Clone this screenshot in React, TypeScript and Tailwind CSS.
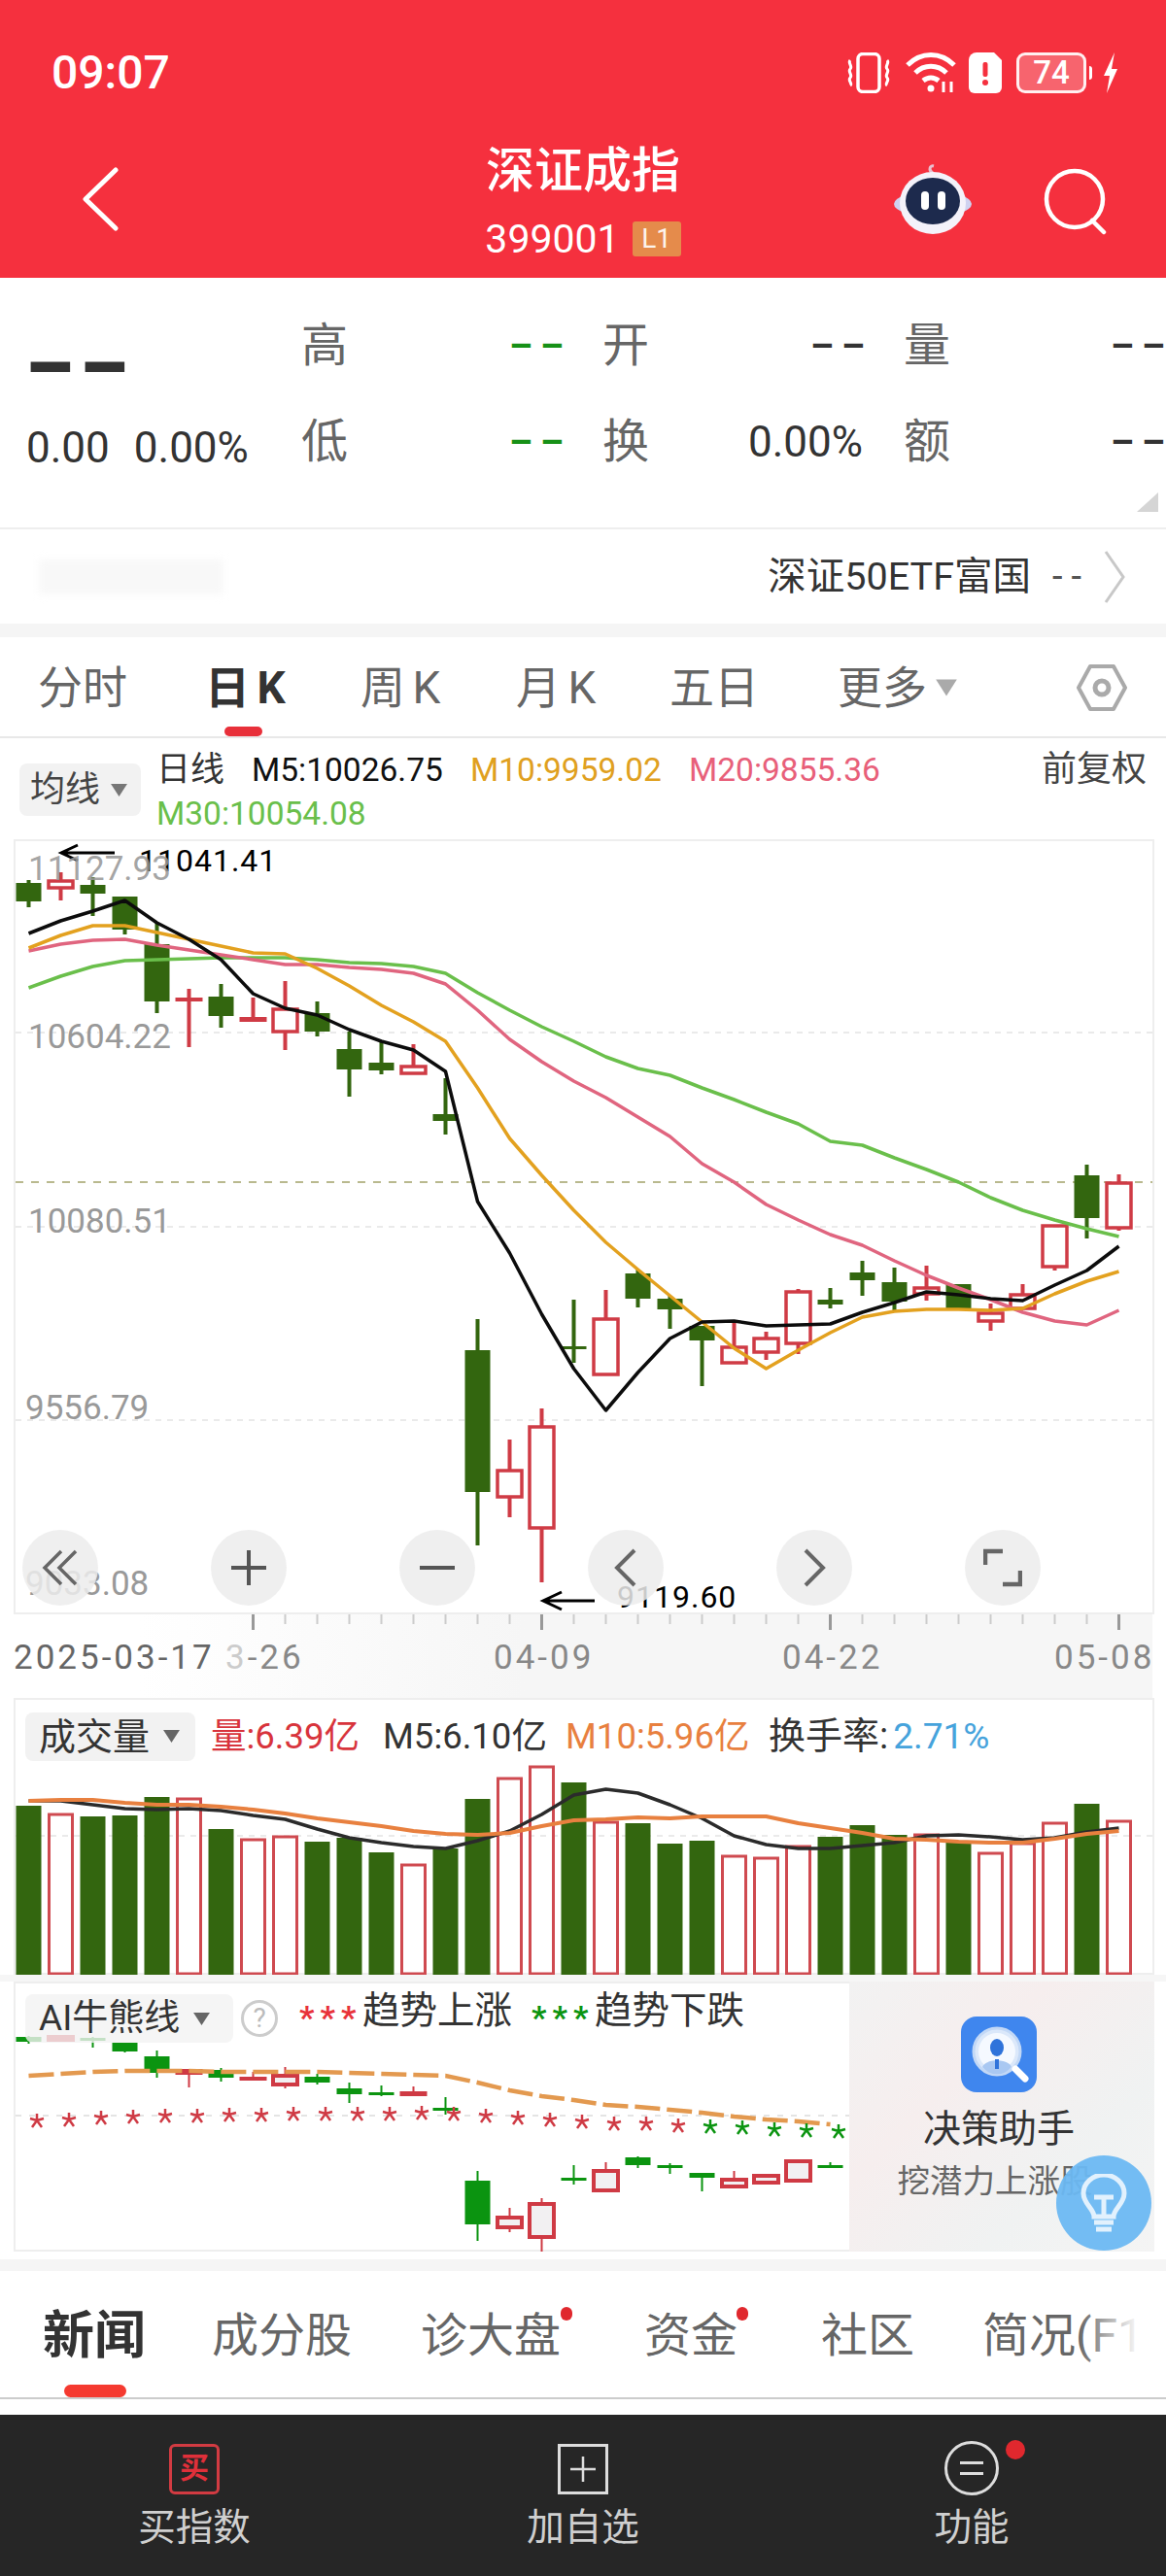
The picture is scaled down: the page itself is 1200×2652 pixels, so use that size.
import React from "react";

const cx = (i: number) => 29.5 + 33 * i;
const pts = (ys: number[]) => ys.map((y, i) => `${cx(i)},${y}`).join(" ");

type C = [string, number, number, number, number];
const main: C[] = [
  ["G",906,909,928,934],["R",898,906,913,927],["G",903,911,920,943],["G",923,923,957,962],["G",950,972,1031,1043],
  ["S",1018,1027,1031,1078],["G",1013,1026,1046,1058],["S",1027,1047,1052,1052],["R",1010,1038,1061,1081],["G",1031,1043,1062,1067],
  ["G",1062,1080,1101,1129],["G",1072,1094,1102,1106],["R",1075,1097,1104,1106],["G",1110,1147,1154,1168],["G",1358,1390,1536,1591],
  ["R",1482,1513,1540,1562],["R",1450,1468,1572,1629],["G",1338,1386,1388,1403],["R",1328,1357,1414,1414],["G",1307,1311,1337,1346],
  ["G",1334,1337,1348,1368],["G",1365,1365,1380,1427],["R",1360,1386,1402,1404],["R",1371,1377,1391,1400],["R",1327,1329,1382,1394],
  ["G",1326,1338,1343,1347],["G",1298,1310,1318,1334],["G",1305,1320,1340,1349],["R",1303,1325,1331,1339],["G",1322,1322,1347,1347],
  ["R",1342,1351,1359,1370],["R",1322,1332,1346,1346],["R",1261,1261,1303,1308],["G",1199,1210,1254,1275],["R",1209,1217,1263,1267],
];
const m5 = [961,948,938,927,950,967,988,1023,1038,1045,1060,1072,1081,1103,1237,1290,1353,1409,1452,1413,1378,1361,1360,1365,1364,1363,1351,1341,1330,1333,1337,1339,1323,1308,1283];
const m10 = [976,963,953,953,960,967,974,981,982,997,1015,1035,1052,1072,1120,1172,1210,1246,1279,1307,1334,1361,1388,1409,1390,1372,1356,1350,1348,1348,1349,1347,1332,1319,1309];
const m20 = [979,972,968,967,973,978,983,988,993,993,996,998,1002,1013,1040,1070,1093,1113,1130,1150,1170,1198,1217,1240,1256,1271,1282,1298,1313,1326,1338,1351,1360,1364,1349];
const m30 = [1017,1005,995,989,988,987,986,986,986,988,991,992,995,1002,1022,1040,1057,1072,1088,1100,1107,1120,1132,1145,1157,1175,1179,1192,1204,1217,1233,1246,1256,1265,1273];

const vol: [string, number][] = [
  ["G",1859],["R",1867],["G",1870],["G",1869],["G",1850],["R",1851],["G",1883],["R",1893],["R",1890],["G",1896],["G",1892],["G",1907],
  ["R",1919],["G",1903],["G",1852],["R",1830],["R",1818],["G",1835],["R",1875],["G",1877],["G",1898],["G",1895],["R",1910],["R",1912],
  ["R",1900],["G",1891],["G",1879],["G",1889],["R",1888],["G",1896],["R",1907],["R",1897],["R",1876],["G",1857],["R",1874],
];
const vb = [1854,1854,1858,1862,1863,1862,1864,1869,1873,1883,1892,1897,1901,1903,1895,1885,1868,1848,1842,1846,1858,1872,1890,1899,1903,1903,1900,1897,1890,1889,1891,1894,1892,1886,1882];
const vo = [1854,1853,1853,1856,1858,1858,1860,1863,1867,1872,1876,1880,1885,1888,1889,1887,1880,1874,1873,1871,1872,1870,1870,1870,1877,1882,1887,1893,1894,1896,1897,1897,1893,1888,1885];

const ai: C[] = [
  ["G",2096,2097,2102,2104],["R",2096,2096,2099,2102],["G",2097,2098,2101,2108],["G",2103,2103,2112,2113],["G",2111,2117,2134,2139],
  ["S",2130,2130,2136,2149],["G",2129,2131,2139,2143],["S",2133,2138,2142,2142],["R",2128,2136,2145,2150],["G",2135,2138,2144,2146],
  ["G",2144,2150,2156,2165],["G",2147,2154,2156,2158],["S",2148,2153,2158,2158],["G",2159,2170,2173,2177],["G",2235,2245,2290,2307],
  ["R",2273,2282,2292,2298],["R",2263,2268,2302,2318],["G",2229,2242,2243,2249],["R",2226,2234,2254,2254],["G",2220,2221,2229,2232],
  ["G",2227,2229,2232,2238],["G",2237,2237,2242,2256],["R",2235,2243,2250,2250],["R",2239,2239,2246,2247],["R",2224,2224,2244,2247],
  ["G",2226,2229,2231,2232],
];
const aiLine = [2137,2135,2133,2132,2132,2132,2133,2133,2133,2133,2134,2135,2136,2137,2144,2152,2158,2162,2167,2169,2172,2175,2179,2182,2184,2187];
const stars = [2183,2182,2180,2179,2178,2178,2177,2177,2176,2176,2176,2176,2175,2176,2178,2180,2182,2184,2186,2186,2188,2189,2190,2192,2193,2194];

function Star({ x, y, color }: { x: number; y: number; color: string }) {
  return (
    <path
      d={`M${x} ${y - 7}L${x} ${y}M${x - 7} ${y - 2}L${x} ${y}M${x + 7} ${y - 2}L${x} ${y}M${x - 5} ${y + 7}L${x} ${y}M${x + 5} ${y + 7}L${x} ${y}`}
      stroke={color}
      strokeWidth="2.5"
      fill="none"
    />
  );
}

function Candles({ data, green, red, wick, sw, hollow }: { data: C[]; green: string; red: string; wick: number; sw: number; hollow: string }) {
  return (
    <>
      {data.map(([t, hi, top, bot, lo], i) => {
        const x = cx(i);
        if (t === "G")
          return (
            <g key={i} fill={green}>
              <rect x={x - wick / 2} y={hi} width={wick} height={lo - hi} />
              <rect x={x - 13} y={top} width={26} height={Math.max(bot - top, 3)} />
            </g>
          );
        if (t === "S")
          return (
            <g key={i} fill={red}>
              <rect x={x - wick / 2} y={hi} width={wick} height={lo - hi} />
              <rect x={x - 14} y={top} width={28} height={bot - top} />
            </g>
          );
        return (
          <g key={i} fill={red}>
            <rect x={x - wick / 2} y={hi} width={wick} height={Math.max(top - hi, 0)} />
            <rect x={x - wick / 2} y={bot} width={wick} height={Math.max(lo - bot, 0)} />
            <rect x={x - 12.5} y={top + 1} width={25} height={bot - top} fill={hollow} stroke={red} strokeWidth={sw} />
          </g>
        );
      })}
    </>
  );
}

function Tri({ className }: { className: string }) {
  return (
    <svg viewBox="0 0 20 16" className={className}>
      <path d="M1 1h18l-9 14z" fill="currentColor" />
    </svg>
  );
}

function Circle({ children }: { children: React.ReactNode }) {
  return <div className="w-[78px] h-[78px] rounded-full bg-[#ececec]/85 flex items-center justify-center">{children}</div>;
}

export default function App() {
  return (
    <div className="w-[1200px] h-[2652px] overflow-hidden bg-white font-['Roboto','Noto_Sans_CJK_SC',sans-serif] flex flex-col">
      {/* Header */}
      <header className="h-[286px] bg-[#f5303e] text-white shrink-0">
        <div className="h-[140px] pl-[53px] pr-[48px] pt-[10px] flex items-center justify-between">
          <span className="text-[48px] leading-[60px] font-medium">09:07</span>
          <div className="flex items-center">
            <svg viewBox="0 0 48 42" className="w-[48px] h-[42px]" fill="none" stroke="#fff">
              <rect x="13" y="1.5" width="22" height="39" rx="5" strokeWidth="3.5" />
              <path d="M5 8c-3 3 3 6 0 9s3 6 0 9 3 6 0 8M43 8c3 3-3 6 0 9s-3 6 0 9-3 6 0 8" strokeWidth="3" />
            </svg>
            <svg viewBox="0 0 54 42" className="w-[54px] h-[42px] ml-[14px]" fill="none" stroke="#fff" strokeWidth="5">
              <path d="M2 13c14-14 34-14 48 0M10 21c9-9 23-9 32 0M18 29c5-4 11-4 16 0" />
              <circle cx="26" cy="37" r="3.5" fill="#fff" stroke="none" />
              <path d="M39 30v11M47 30v11" strokeWidth="3" />
            </svg>
            <svg viewBox="0 0 34 42" className="w-[34px] h-[42px] ml-[11px]">
              <path d="M8 0h18l8 8v28a6 6 0 0 1-6 6H6a6 6 0 0 1-6-6V8a8 8 0 0 1 8-8z" fill="#fff" />
              <rect x="14.5" y="10" width="5" height="15" rx="2" fill="#f5303e" />
              <circle cx="17" cy="31" r="3" fill="#f5303e" />
            </svg>
            <div className="ml-[15px] w-[72px] h-[42px] rounded-[9px] border-[3px] border-white/90 bg-white/25 text-[33px] leading-[36px] text-center font-medium">74</div>
            <div className="w-[3px] h-[14px] bg-white ml-[3px] rounded-r" />
            <svg viewBox="0 0 18 42" className="w-[18px] h-[42px] ml-[10px]">
              <path d="M13 0L2 24h6L5 42 16 17h-6z" fill="#fff" />
            </svg>
          </div>
        </div>
        <div className="h-[146px] grid grid-cols-[1fr_auto_1fr]">
          <div className="pl-[84px] pt-[32px]">
            <svg viewBox="0 0 38 66" className="w-[38px] h-[66px]" fill="none" stroke="#fff" strokeWidth="5" strokeLinecap="round" strokeLinejoin="round">
              <path d="M35 3L4 33l31 30" />
            </svg>
          </div>
          <div className="flex flex-col items-center pt-[11px]">
            <div className="text-[50px] leading-[50px] font-medium">深证成指</div>
            <div className="mt-[25px] flex items-center h-[40px]">
              <span className="text-[41px] leading-[40px]">399001</span>
              <span className="ml-[13px] w-[50px] h-[36px] bg-[#e58b4b] rounded-[3px] text-[28px] leading-[36px] text-center text-white/90">L1</span>
            </div>
          </div>
          <div className="flex justify-end items-start pr-[60px] pt-[29px]">
            <svg viewBox="0 0 80 72" className="w-[80px] h-[72px]">
              <path d="M40 9c-5-3-3-8 1-7" fill="none" stroke="#e8c0d0" strokeWidth="3" />
              <ellipse cx="40" cy="41" rx="40" ry="13" fill="#cfd2f0" />
              <ellipse cx="40" cy="40" rx="34" ry="32" fill="#f4f2fa" />
              <ellipse cx="40" cy="38" rx="28" ry="24" fill="#1d2a4d" />
              <rect x="28" y="28" width="8" height="19" rx="4" fill="#fff" />
              <rect x="45" y="28" width="8" height="19" rx="4" fill="#fff" />
            </svg>
            <svg viewBox="0 0 66 70" className="w-[66px] h-[70px] ml-[74px] mt-[3px]" fill="none" stroke="#fff" strokeWidth="4.5" strokeLinecap="round">
              <circle cx="32" cy="33" r="29" />
              <path d="M50 55l12 12" />
            </svg>
          </div>
        </div>
      </header>

      {/* Stats */}
      <section className="relative h-[259px] shrink-0 border-b-2 border-[#eeeeee] flex text-[#666]">
        <div className="w-[310px] shrink-0 pl-[27px] relative">
          <div className="text-[76px] leading-[40px] mt-[72px] font-bold text-[#333] tracking-[8px] [-webkit-text-stroke:2px_#333]">––</div>
          <div className="mt-[38px] flex text-[44px] leading-[50px] text-[#333]">
            <span>0.00</span>
            <span className="ml-[25px]">0.00%</span>
          </div>
        </div>
        <div className="flex-1 grid grid-cols-[310px_310px_270px] grid-rows-[60px_60px] gap-y-[39px] pt-[40px] text-[48px] leading-[60px]">
          <div className="flex justify-between pr-[32px]">
            <span>高</span>
            <span className="text-[#179117] text-[38px] font-bold tracking-[8px]">––</span>
          </div>
          <div className="flex justify-between pr-[32px]">
            <span>开</span>
            <span className="text-[#333] text-[38px] font-bold tracking-[8px]">––</span>
          </div>
          <div className="flex justify-between">
            <span>量</span>
            <span className="text-[#333] text-[38px] font-bold tracking-[8px] -mr-[7px]">––</span>
          </div>
          <div className="flex justify-between pr-[32px]">
            <span>低</span>
            <span className="text-[#179117] text-[38px] font-bold tracking-[8px]">––</span>
          </div>
          <div className="flex justify-between pr-[42px]">
            <span>换</span>
            <span className="text-[#333] text-[44px]">0.00%</span>
          </div>
          <div className="flex justify-between">
            <span>额</span>
            <span className="text-[#333] text-[38px] font-bold tracking-[8px] -mr-[7px]">––</span>
          </div>
        </div>
        <svg viewBox="0 0 22 20" className="absolute right-[8px] bottom-[16px] w-[22px] h-[20px]">
          <path d="M22 0v20H0z" fill="#d5d5d5" />
        </svg>
      </section>

      {/* ETF row */}
      <div className="h-[97px] shrink-0 flex items-center pl-[40px] pr-[42px]">
        <div className="w-[190px] h-[36px] bg-[#f8f8f8] blur-[4px]" />
        <span className="ml-auto text-[39.5px] leading-[50px] text-[#333]">深证50ETF富国</span>
        <span className="ml-[22px] text-[38px] tracking-[9px] text-[#555]">--</span>
        <svg viewBox="0 0 22 56" className="ml-[14px] w-[22px] h-[56px]" fill="none" stroke="#c8c8c8" strokeWidth="3">
          <path d="M2 2l18 26L2 54" />
        </svg>
      </div>
      <div className="h-[14px] shrink-0 bg-[#f5f5f5]" />

      {/* Period tabs */}
      <nav className="relative h-[104px] shrink-0 border-b-2 border-[#e8e8e8] pl-[39px] pt-[2px] flex items-center text-[46px] leading-[56px] text-[#666] [word-spacing:-4px]">
        <span className="w-[172px] shrink-0">分时</span>
        <span className="w-[160px] shrink-0 font-bold text-[#333]">日 K</span>
        <span className="w-[160px] shrink-0">周 K</span>
        <span className="w-[158px] shrink-0">月 K</span>
        <span className="w-[173px] shrink-0">五日</span>
        <span className="flex items-center shrink-0">
          更多
          <Tri className="w-[24px] h-[20px] ml-[8px] text-[#aaa]" />
        </span>
        <svg viewBox="0 0 52 50" className="ml-[122px] w-[52px] h-[50px] shrink-0" fill="none" stroke="#aaa" strokeWidth="4">
          <path d="M14 3h24l12 22-12 22H14L2 25z" strokeLinejoin="round" />
          <circle cx="26" cy="25" r="7" strokeWidth="5" />
        </svg>
        <div className="absolute left-[231px] bottom-0 w-[39px] h-[10px] rounded-full bg-[#e8303a]" />
      </nav>

      {/* Legend */}
      <div className="h-[104px] shrink-0 pl-[20px] flex items-start">
        <div className="mt-[26px] w-[125px] h-[54px] rounded-[8px] bg-[#f2f2f2] flex items-center pl-[11px] text-[36px] text-[#444] shrink-0">
          均线
          <Tri className="w-[19px] h-[15px] ml-[10px] text-[#777]" />
        </div>
        <div className="ml-[16px] flex-1 pr-[20px] pt-[10px] text-[33.5px] leading-[45px]">
          <div className="flex">
            <span className="text-[#333] w-[98px] text-[35px]">日线</span>
            <span className="text-[#111] w-[225px]">M5:10026.75</span>
            <span className="text-[#e0a020] w-[225px]">M10:9959.02</span>
            <span className="text-[#e8607a]">M20:9855.36</span>
            <span className="ml-auto text-[#444] text-[36px]">前复权</span>
          </div>
          <div className="text-[#6abf4b]">M30:10054.08</div>
        </div>
      </div>

      {/* K chart */}
      <div className="relative mx-[14px] w-[1174px] h-[798px] shrink-0 ring-2 ring-inset ring-[#eeeeee]">
        <svg viewBox="14 864 1174 798" className="absolute inset-0 w-[1174px] h-[798px]" fill="none">
          <g stroke="#e4e4e4" strokeWidth="1.5" strokeDasharray="6 6">
            <path d="M16 1063H1186M16 1263H1186M16 1462H1186" />
          </g>
          <path d="M16 1217H1186" stroke="#b9b98e" strokeWidth="2" strokeDasharray="8 8" />
          <Candles data={main} green="#33660f" red="#cf3b45" wick={4} sw={3.5} hollow="none" />
          <polyline points={pts(m30)} stroke="#6abf4b" strokeWidth="3.5" strokeLinejoin="round" />
          <polyline points={pts(m20)} stroke="#e0657f" strokeWidth="3.5" strokeLinejoin="round" />
          <polyline points={pts(m10)} stroke="#e3a11f" strokeWidth="3.5" strokeLinejoin="round" />
          <polyline points={pts(m5)} stroke="#0c0c0c" strokeWidth="3.5" strokeLinejoin="round" />
          <path d="M118 878H63M80 870l-17 8 17 8" stroke="#000" strokeWidth="3" />
          <path d="M612 1648H559M578 1639l-19 9 19 9" stroke="#000" strokeWidth="3" />
        </svg>
        <span className="absolute left-[129px] top-[2px] text-[32px] leading-[40px] tracking-[1px] text-black">11041.41</span>
        <span className="absolute left-[15px] top-[11px] text-[35px] leading-[40px] text-[#999]/90">11127.93</span>
        <span className="absolute left-[15px] top-[184px] text-[35px] leading-[40px] text-[#999]">10604.22</span>
        <span className="absolute left-[15px] top-[374px] text-[35px] leading-[40px] text-[#999]">10080.51</span>
        <span className="absolute left-[12px] top-[566px] text-[35px] leading-[40px] text-[#999]">9556.79</span>
        <span className="absolute left-[12px] top-[747px] text-[35px] leading-[40px] text-[#999]">9033.08</span>
        <span className="absolute left-[621px] top-[760px] text-[32px] leading-[40px] tracking-[1px] text-black">9119.60</span>
        <div className="absolute left-[9px] top-[711px] flex gap-[116px]">
          <Circle>
            <svg viewBox="0 0 40 40" className="w-[40px] h-[40px]" fill="none" stroke="#666" strokeWidth="3.5">
              <path d="M21 3L4 20l17 17M36 3L19 20l17 17" />
            </svg>
          </Circle>
          <Circle>
            <svg viewBox="0 0 40 40" className="w-[40px] h-[40px]" fill="none" stroke="#555" strokeWidth="4">
              <path d="M2 20h36M20 2v36" />
            </svg>
          </Circle>
          <Circle>
            <svg viewBox="0 0 40 40" className="w-[40px] h-[40px]" fill="none" stroke="#555" strokeWidth="4">
              <path d="M2 20h36" />
            </svg>
          </Circle>
          <Circle>
            <svg viewBox="0 0 24 40" className="w-[24px] h-[40px]" fill="none" stroke="#666" strokeWidth="4">
              <path d="M21 2L3 20l18 18" />
            </svg>
          </Circle>
          <Circle>
            <svg viewBox="0 0 24 40" className="w-[24px] h-[40px]" fill="none" stroke="#666" strokeWidth="4">
              <path d="M3 2l18 18L3 38" />
            </svg>
          </Circle>
          <Circle>
            <svg viewBox="0 0 40 40" className="w-[40px] h-[40px]" fill="none" stroke="#666" strokeWidth="4.5">
              <path d="M2 17V3h18M38 23v14H20" />
            </svg>
          </Circle>
        </div>
      </div>

      {/* Axis */}
      <div className="h-[86px] shrink-0 bg-[linear-gradient(to_right,#fff_12%,#f6f6f6_45%,#f6f6f6_98.8%,#fff_98.8%)]">
        <svg viewBox="0 1662 1200 17" className="block w-[1200px] h-[17px]">
          {main.map((_, i) =>
            i < 7 ? null : [7, 16, 25, 34].includes(i) ? (
              <rect key={i} x={cx(i) - 1.5} y={1662} width={3} height={16} fill="#999" />
            ) : (
              <rect key={i} x={cx(i) - 1} y={1662} width={2} height={10} fill="#ccc" />
            )
          )}
        </svg>
        <div className="mt-[8px] pl-[14px] flex text-[35px] leading-[40px] tracking-[3px] text-[#888]">
          <span className="w-[218px] shrink-0 text-[#666]">2025-03-17</span>
          <span className="w-[276px] shrink-0">
            <span className="text-[#ccc]">3</span>-26
          </span>
          <span className="w-[297px] shrink-0">04-09</span>
          <span className="w-[280px] shrink-0">04-22</span>
          <span className="shrink-0">05-08</span>
        </div>
      </div>

      {/* Volume */}
      <div className="relative mx-[14px] w-[1174px] h-[285px] shrink-0 bg-white ring-2 ring-inset ring-[#eeeeee]">
        <svg viewBox="14 1748 1174 285" className="absolute inset-0 w-[1174px] h-[285px]" fill="none">
          <path d="M16 1890H1186" stroke="#e4e4e4" strokeWidth="1.5" strokeDasharray="6 6" />
          {vol.map(([t, y], i) =>
            t === "G" ? (
              <rect key={i} x={cx(i) - 13} y={y} width={26} height={2033 - y} fill="#33660f" />
            ) : (
              <rect key={i} x={cx(i) - 12} y={y + 1} width={24} height={2031 - y} stroke="#cf4a50" strokeWidth="3" />
            )
          )}
          <polyline points={pts(vb)} stroke="#2b2b2b" strokeWidth="3.5" strokeLinejoin="round" />
          <polyline points={pts(vo)} stroke="#e8803f" strokeWidth="4" strokeLinejoin="round" />
        </svg>
        <div className="relative pl-[12px] pt-[14px] flex items-center text-[36.5px] leading-[50px]">
          <div className="w-[175px] h-[50px] rounded-[8px] bg-[#f2f2f2] flex items-center pl-[14px] text-[38px] text-[#333] shrink-0">
            成交量
            <Tri className="w-[19px] h-[15px] ml-[13px] text-[#666]" />
          </div>
          <span className="ml-[16px] text-[#d8343c] w-[177px] shrink-0">量:6.39亿</span>
          <span className="text-[#333] w-[188px] shrink-0">M5:6.10亿</span>
          <span className="text-[#e8803f] w-[209px] shrink-0">M10:5.96亿</span>
          <span className="text-[#333] text-[38px] shrink-0">
            换手率:<span className="text-[#46a3dc] text-[37px] ml-[5px]">2.71%</span>
          </span>
        </div>
      </div>
      <div className="h-[7px] shrink-0 bg-[#f6f6f6]" />

      {/* AI */}
      <div className="relative mx-[14px] w-[1174px] h-[278px] shrink-0 flex bg-white ring-2 ring-inset ring-[#eeeeee]">
        <div className="relative w-[860px] h-[278px] shrink-0">
          <svg viewBox="14 2040 860 278" className="absolute inset-0 w-[860px] h-[278px]" fill="none">
            <path d="M16 2178H874" stroke="#e4e4e4" strokeWidth="2" strokeDasharray="6 8" />
            <Candles data={ai} green="#0b9410" red="#cf3a44" wick={2} sw={4} hollow="#f2f0f2" />
            <polyline points={pts(aiLine)} stroke="#e3994f" strokeWidth="4.5" strokeDasharray="26 7" />
            {stars.map((y, i) => (
              <Star key={i} x={38 + 33 * i} y={y} color={i > 20 ? "#0b9410" : "#cf3a44"} />
            ))}
          </svg>
          <div className="absolute left-[12px] top-[13px] flex items-start">
            <div className="w-[214px] h-[50px] rounded-[8px] bg-[#f2f2f2]/80 flex items-center pl-[14px] text-[37px] leading-[50px] text-[#333]">
              AI牛熊线
              <Tri className="w-[19px] h-[15px] ml-[13px] text-[#666]" />
            </div>
            <div className="ml-[8px] mt-[6px] w-[38px] h-[38px] rounded-full border-[3px] border-[#ccc] text-[#bbb] text-[28px] leading-[32px] text-center">?</div>
            <div className="ml-[22px] flex text-[38.5px] leading-[50px] text-[#333] -mt-[8px]">
              <span className="text-[#e8333a] text-[34px] font-bold tracking-[6px] mt-[7px] w-[65px]">***</span>
              <span className="w-[174px]">趋势上涨</span>
              <span className="text-[#0b9410] text-[34px] font-bold tracking-[6px] mt-[7px] w-[65px]">***</span>
              <span>趋势下跌</span>
            </div>
          </div>
        </div>
        <div className="flex-1 bg-[linear-gradient(135deg,#f2f2f2,#f6eeee_35%,#f0f2f2_70%,#f4f4f4)] flex flex-col items-center pt-[36px] pr-[6px]">
          <svg viewBox="0 0 78 78" className="w-[78px] h-[78px]">
            <rect width="78" height="78" rx="16" fill="#3f86ee" />
            <circle cx="37" cy="36" r="24" fill="#dbe8fa" stroke="#c2d8f6" strokeWidth="3" />
            <circle cx="37" cy="36" r="19" fill="#f5f9ff" />
            <ellipse cx="37" cy="32" rx="7" ry="9" fill="#2f73da" />
            <path d="M22 52c3-9 27-9 30 0a19 19 0 0 1-30 0z" fill="#a9c8f2" />
            <path d="M35 44h4v10h-4z" fill="#2f73da" />
            <path d="M56 54l10 10" stroke="#fff" strokeWidth="7" strokeLinecap="round" />
          </svg>
          <div className="mt-[13px] text-[39px] leading-[50px] text-[#333]">决策助手</div>
          <div className="mt-[7px] -ml-[8px] text-[33.5px] leading-[44px] text-[#666] whitespace-nowrap">挖潜力上涨股</div>
        </div>
        <div className="absolute right-[3px] bottom-[1px] w-[98px] h-[98px] rounded-full bg-[#6bb8f2]/95 flex items-center justify-center">
          <svg viewBox="0 0 48 60" className="w-[48px] h-[60px]" fill="none" stroke="#e2f1fd" strokeWidth="5">
            <path d="M14 44c0-8-11-13-11-24a21 19 0 0 1 42 0c0 11-11 16-11 24z" />
            <path d="M14 24h20M24 24v20M14 50h20M16 57h16" />
          </svg>
        </div>
      </div>
      <div className="h-[8px] shrink-0" />
      <div className="h-[12px] shrink-0 bg-[#f5f5f5]" />

      {/* News tabs */}
      <div className="relative h-[132px] shrink-0 border-b-2 border-[#cccccc] overflow-hidden flex pl-[44px] pt-[37px] text-[48px] leading-[60px] text-[#666] whitespace-nowrap">
        <span className="w-[174px] shrink-0 text-[53px] font-bold text-[#333]">新闻</span>
        <span className="w-[215px] shrink-0">成分股</span>
        <span className="w-[230px] shrink-0 relative">
          诊大盘
          <span className="absolute left-[144px] top-[0px] w-[12px] h-[14px] rounded-full bg-[#e0282e]" />
        </span>
        <span className="w-[182px] shrink-0 relative">
          资金
          <span className="absolute left-[95px] top-[0px] w-[12px] h-[14px] rounded-full bg-[#e0282e]" />
        </span>
        <span className="w-[166px] shrink-0">社区</span>
        <span className="shrink-0">简况(F10)</span>
        <div className="absolute right-0 top-0 h-full w-[90px] bg-[linear-gradient(to_right,transparent,#fff_70%)]" />
        <div className="absolute left-[66px] bottom-0 w-[64px] h-[13px] rounded-full bg-[#f53a30]" />
      </div>
      <div className="h-[16px] shrink-0" />

      {/* Footer */}
      <footer className="flex-1 bg-[#262626] grid grid-cols-3 text-[38.5px] leading-[40px] text-[#cfcfcf]">
        <div className="flex flex-col items-center pt-[30px]">
          <div className="w-[52px] h-[52px] rounded-[6px] border-[3px] border-[#d23b42] text-[#e0303a] text-[30px] leading-[44px] text-center font-bold">买</div>
          <div className="mt-[14px]">买指数</div>
        </div>
        <div className="flex flex-col items-center pt-[30px]">
          <div className="w-[52px] h-[52px] border-[3px] border-[#dddddd] flex items-center justify-center">
            <svg viewBox="0 0 26 26" className="w-[26px] h-[26px]" stroke="#ddd" strokeWidth="2.5">
              <path d="M0 13h26M13 0v26" />
            </svg>
          </div>
          <div className="mt-[14px]">加自选</div>
        </div>
        <div className="relative flex flex-col items-center pt-[27px]">
          <div className="w-[56px] h-[56px] rounded-full border-[3px] border-[#dddddd] flex flex-col items-center justify-center gap-[8px]">
            <div className="w-[24px] h-[3px] bg-[#ddd]" />
            <div className="w-[24px] h-[3px] bg-[#ddd]" />
          </div>
          <div className="mt-[13px]">功能</div>
          <div className="absolute left-[235px] top-[26px] w-[20px] h-[20px] rounded-full bg-[#e0282e]" />
        </div>
      </footer>
    </div>
  );
}
